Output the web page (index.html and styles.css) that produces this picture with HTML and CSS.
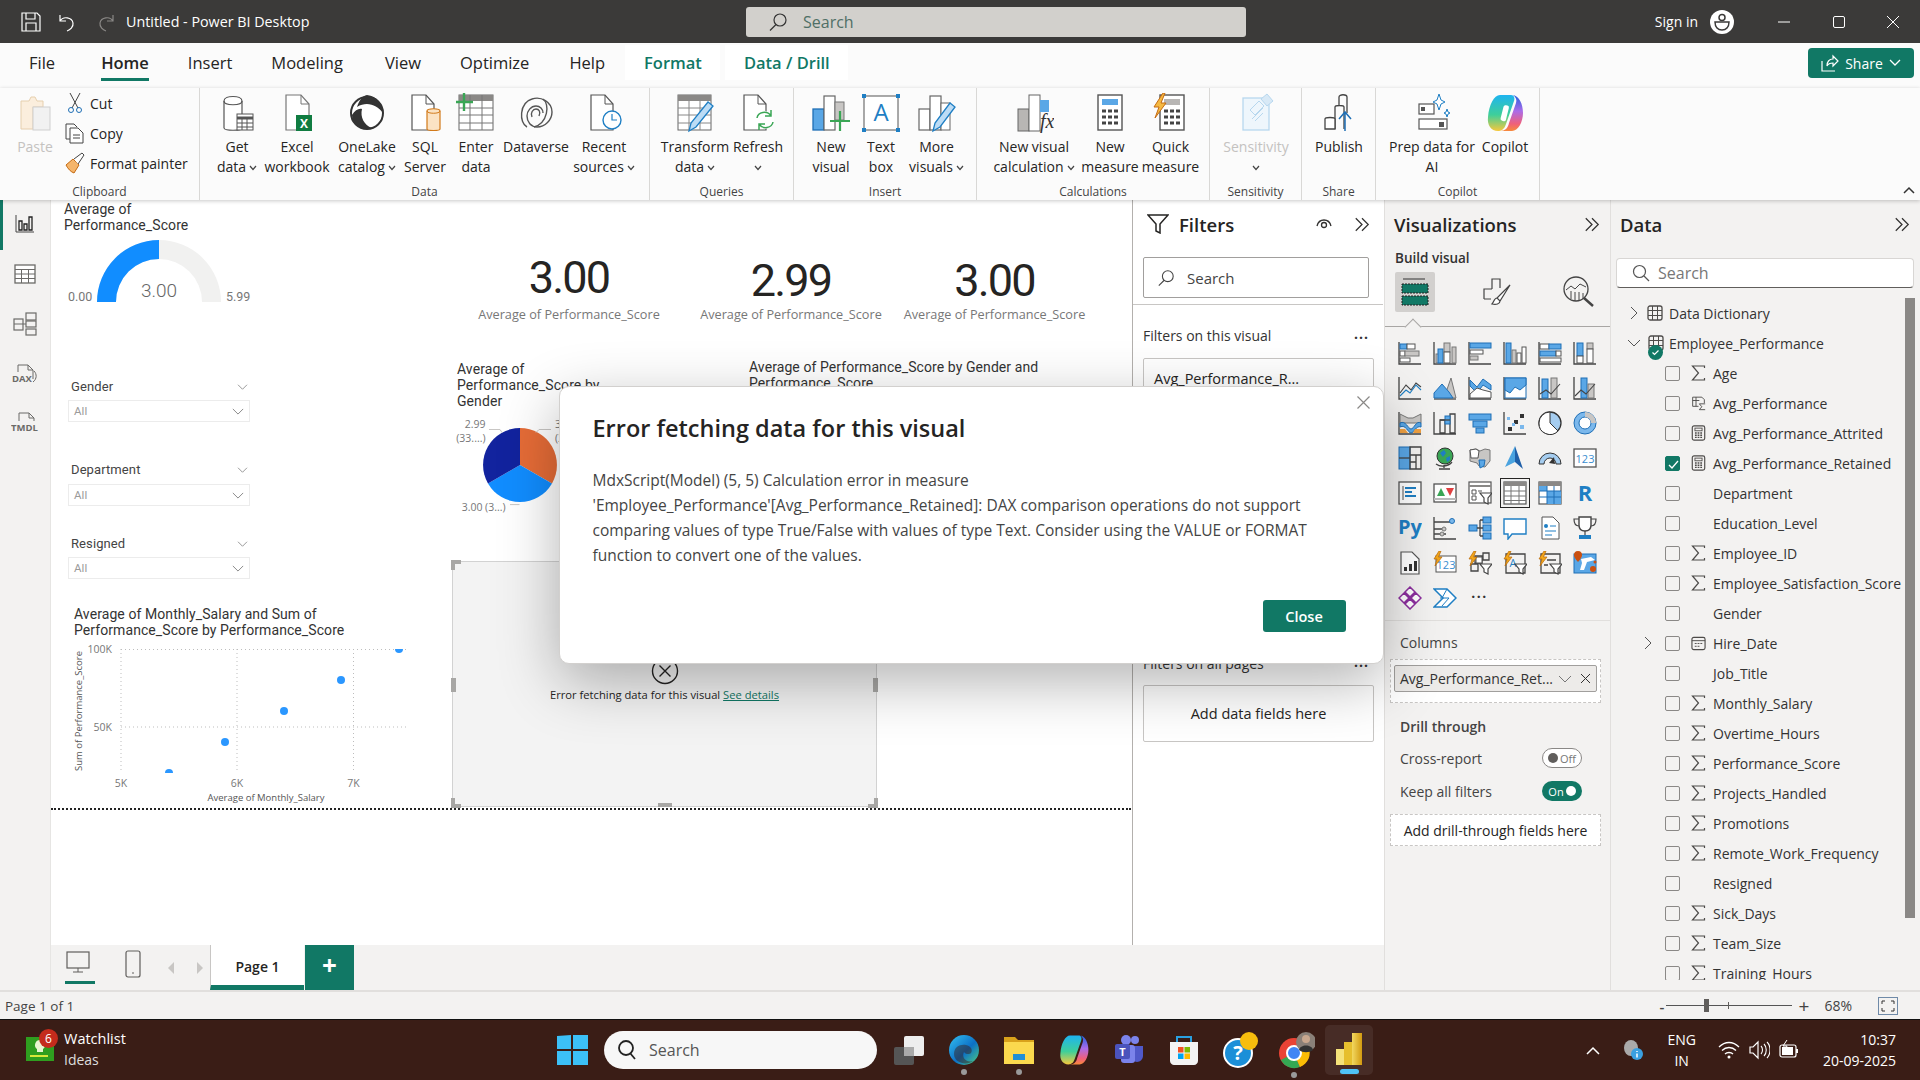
FILE: index.html
```html
<!DOCTYPE html>
<html lang="en">
<head>
<meta charset="utf-8">
<title>Untitled - Power BI Desktop</title>
<link rel="stylesheet" href="styles.css">
</head>
<body>
<svg class="defs" width="0" height="0" aria-hidden="true">
  <defs>
    <linearGradient id="cp1" x1="0" y1="0" x2="0" y2="1"><stop offset="0" stop-color="#1eb4f0"/><stop offset=".55" stop-color="#3ecf9a"/><stop offset="1" stop-color="#f7c83c"/></linearGradient>
    <linearGradient id="cp2" x1="0" y1="0" x2="0" y2="1"><stop offset="0" stop-color="#2560e0"/><stop offset=".45" stop-color="#ab6ce8"/><stop offset=".8" stop-color="#f0607a"/><stop offset="1" stop-color="#f78a3a"/></linearGradient>
    <linearGradient id="pb" x1="0" y1="0" x2="1" y2="0"><stop offset="0" stop-color="#f2d860"/><stop offset="1" stop-color="#d29a10"/></linearGradient>
    <linearGradient id="edge" x1="0" y1="0" x2="1" y2="1"><stop offset="0" stop-color="#35c1f1"/><stop offset=".55" stop-color="#0c70c6"/><stop offset="1" stop-color="#52d17c"/></linearGradient>
    <symbol id="sigma" viewBox="0 0 14 16"><path d="M13 3V1H1l6 7-6 7h12v-2" fill="none" stroke="#4d4b49" stroke-width="1.2"/></symbol>
    <symbol id="calc" viewBox="0 0 16 18"><rect x="1" y="1" width="14" height="16" rx="2" fill="none" stroke="#4d4b49" stroke-width="1.3"/><rect x="4" y="3.5" width="8" height="3" fill="none" stroke="#4d4b49"/><path d="M4 9h2M7 9h2M10 9h2M4 11.5h2M7 11.5h2M10 11.5h2M4 14h2M7 14h2M10 14h2" stroke="#4d4b49" stroke-width="1.5"/></symbol>
    <symbol id="dbl" viewBox="0 0 18 16"><path d="M2 1l7 7-7 7M9 1l7 7-7 7" fill="none" stroke="#323130" stroke-width="1.4"/></symbol>
    <symbol id="down" viewBox="0 0 14 8"><path d="M1 1l6 6 6-6" fill="none" stroke="#777" stroke-width="1"/></symbol>
    <symbol id="cv" viewBox="0 0 8 6"><path d="M1 1l3 3.5L7 1" fill="none" stroke="#444" stroke-width="1.2"/></symbol>
    <symbol id="tbl" viewBox="0 0 16 16"><rect x="1" y="1" width="14" height="14" rx="2" fill="none" stroke="#4d4b49" stroke-width="1.3"/><path d="M1 5.5h14M1 10.500h14M5.500 1v14M10.500 1v14" stroke="#4d4b49"/></symbol>
    <symbol id="mag" viewBox="0 0 20 20"><circle cx="12" cy="8" r="6" fill="none" stroke="currentColor" stroke-width="1.2"/><path d="M8 12.500L2 18.500" stroke="currentColor" stroke-width="1.2"/></symbol>
    <symbol id="bolt" viewBox="0 0 10 16"><path d="M6 0L1 8h3L2 15l7-9H5.500L8 0z" fill="#f2a71b" stroke="#b8690a" stroke-width=".7"/></symbol>
  </defs>
</svg>

<div class="app">
  <header class="titlebar">
    <div class="tb-left">
      <svg class="tb-ic" viewBox="0 0 20 20"><path d="M1 1h15l3 3v15H1zM5 1v6h9V1M5 19v-8h10v8" fill="none" stroke="#fff" stroke-width="1.2"/></svg>
      <svg class="tb-ic" viewBox="0 0 20 20"><path d="M2 3v6h6M2 9c3-5 12-4 13 2 .6 4-3 7-6 8" fill="none" stroke="#fff" stroke-width="1.200"/></svg>
      <svg class="tb-ic tb-dim" viewBox="0 0 20 20"><path d="M18 3v6h-6M18 9c-3-5-12-4-13 2-.6 4 3 7 6 8" fill="none" stroke="#8a8886" stroke-width="1.200"/></svg>
      <span class="tb-title">Untitled - Power BI Desktop</span>
    </div>
    <div class="tb-search"><svg class="tb-mag"><use href="#mag"/></svg><span>Search</span></div>
    <div class="tb-right">
      <span class="tb-sign">Sign in</span>
      <svg class="tb-av" viewBox="0 0 24 24"><circle cx="12" cy="12" r="12" fill="#fff"/><circle cx="12" cy="7.500" r="3" fill="none" stroke="#3b3a39" stroke-width="1.500"/><path d="M5 12h14c0 5-3 8-7 8s-7-3-7-8z" fill="none" stroke="#3b3a39" stroke-width="1.500"/></svg>
      <span class="win-b"><svg width="14" height="14" viewBox="0 0 14 14"><path d="M1 7h12" stroke="#fff"/></svg></span>
      <span class="win-b"><svg width="14" height="14" viewBox="0 0 14 14"><rect x="1.500" y="1.500" width="11" height="11" rx="1.500" fill="none" stroke="#fff"/></svg></span>
      <span class="win-b"><svg width="14" height="14" viewBox="0 0 14 14"><path d="M1 1l12 12M13 1L1 13" stroke="#fff"/></svg></span>
    </div>
  </header>

  <nav class="tabs">
    <span class="tab">File</span>
    <span class="tab tab-on">Home</span>
    <span class="tab">Insert</span>
    <span class="tab">Modeling</span>
    <span class="tab tab-view">View</span>
    <span class="tab">Optimize</span>
    <span class="tab tab-help">Help</span>
    <span class="tab tab-ctx">Format</span>
    <span class="tab tab-ctx tab-ctx2">Data / Drill</span>
    <button class="share"><svg width="18" height="18" viewBox="0 0 18 18"><path d="M1 7v10h13M6 12c0-5 3-7 6-7V2l5 5-5 5V9c-3 0-5 1-6 3z" fill="none" stroke="#fff" stroke-width="1.200"/></svg><span>Share</span><svg width="12" height="8" viewBox="0 0 12 8"><path d="M1 1l5 5 5-5" fill="none" stroke="#fff" stroke-width="1.300"/></svg></button>
  </nav>

  <section class="ribbon">
    <div class="grp g-clip">
      <div class="g-body clip-body">
        <div class="rb paste">
          <svg width="40" height="40" viewBox="0 0 40 40"><path d="M6 8h8l2-4h4l2 4h6v6H18v22H6z" fill="#fbeedd" stroke="#e6cfae"/><rect x="18" y="14" width="17" height="23" fill="#f1f1f1" stroke="#cfcfcf"/></svg>
          <span>Paste</span>
        </div>
        <div class="clip-col">
          <div class="clip-row"><svg width="16" height="22" viewBox="0 0 16 22"><path d="M3 1l8 15M13 1L5 16" stroke="#444" fill="none"/><circle cx="4" cy="18" r="2.500" fill="none" stroke="#1f6fb5"/><circle cx="12" cy="18" r="2.500" fill="none" stroke="#1f6fb5"/></svg><span>Cut</span></div>
          <div class="clip-row"><svg width="20" height="22" viewBox="0 0 20 22"><path d="M1 2h8l3 3M1 2v15h4" fill="none" stroke="#444"/><path d="M5 6h8l5 5v10H5z" fill="#fff" stroke="#444"/><path d="M8 13h7M8 16h7" stroke="#444"/></svg><span>Copy</span></div>
          <div class="clip-row"><svg width="20" height="22" viewBox="0 0 20 22"><path d="M1 13l7-6 6 6-5 8c-3-1-6-4-8-8z" fill="#f5b56b" stroke="#c46a12"/><path d="M9 7l8-6 2 2-6 9" fill="#fff" stroke="#444"/></svg><span>Format painter</span></div>
        </div>
      </div>
      <div class="g-label">Clipboard</div>
    </div>

    <div class="grp g-data">
      <div class="g-body cols-data">
        <div class="rb"><svg width="40" height="40" viewBox="0 0 40 40"><path d="M7 8c0-6 18-6 18 0v27c0 3-18 3-18 0z" fill="#fff" stroke="#555" stroke-width="1.200"/><path d="M7 8c0 5 18 5 18 0" fill="none" stroke="#555" stroke-width="1.200"/><rect x="20" y="21" width="16" height="16" fill="#fff" stroke="#555"/><path d="M20 25h16" stroke="#555" stroke-width="3"/><path d="M20 30h16M20 34h16M25 25v12M30 25v12" stroke="#555"/></svg><span>Get</span><span>data <svg class="cv"><use href="#cv"/></svg></span></div>
        <div class="rb"><svg width="40" height="40" viewBox="0 0 40 40"><path d="M9 2h15l8 9v26H9z" fill="#fff" stroke="#777" stroke-width="1.200"/><path d="M24 2v9h8" fill="none" stroke="#777"/><rect x="19" y="22" width="16" height="16" fill="#107c41"/><text x="27" y="35" class="xl">X</text></svg><span>Excel</span><span>workbook</span></div>
        <div class="rb"><svg width="40" height="40" viewBox="0 0 40 40"><circle cx="20" cy="20" r="16" fill="#fff" stroke="#333" stroke-width="2"/><path d="M20 2c10 1 16 9 16 18-6-8-16-12-26-6C12 8 15 3 20 2zM5 22c3-5 7-7 10-6-2 8 2 16 10 19-11 3-20-3-20-13z" fill="#333"/></svg><span>OneLake</span><span>catalog <svg class="cv"><use href="#cv"/></svg></span></div>
        <div class="rb"><svg width="40" height="40" viewBox="0 0 40 40"><path d="M7 2h14l8 9v26H7z" fill="#fff" stroke="#555" stroke-width="1.200"/><path d="M21 2v9h8" fill="none" stroke="#555"/><path d="M22 18c0-3 13-3 13 0v18c0 2-13 2-13 0z" fill="#fbe3c4" stroke="#d27a1a" stroke-width="1.200"/><path d="M22 18c0 3 13 3 13 0" fill="none" stroke="#d27a1a"/></svg><span>SQL</span><span>Server</span></div>
        <div class="rb"><svg width="40" height="40" viewBox="0 0 40 40"><rect x="3" y="2" width="34" height="35" fill="#fff" stroke="#666"/><rect x="3" y="2" width="34" height="6" fill="#8a8886"/><path d="M3 15h34M3 22h34M3 30h34M14 2v35M26 2v35" stroke="#777"/><path d="M8 0v18M0 9h17" stroke="#3aa655" stroke-width="2.400"/></svg><span>Enter</span><span>data</span></div>
        <div class="rb"><svg width="40" height="40" viewBox="0 0 40 40"><g fill="none" stroke="#555" stroke-width="1.400"><path d="M11 34C3 30 3 10 16 6c9-3 20 3 20 13 0 8-7 15-15 15-6 0-10-5-10-11 0-5 4-10 9-10 4 0 7 3 7 7"/><path d="M27 6c7 5 5 24-9 28"/><path d="M16 24c-2-4 1-8 4-8s5 3 3 7"/></g></svg><span>Dataverse</span></div>
        <div class="rb"><svg width="40" height="40" viewBox="0 0 40 40"><path d="M7 2h14l8 9v26H7z" fill="#fff" stroke="#555" stroke-width="1.200"/><path d="M21 2v9h8" fill="none" stroke="#555"/><circle cx="28" cy="27" r="9" fill="#fff" stroke="#1f7fc4" stroke-width="1.400"/><path d="M28 21v6h5" fill="none" stroke="#1f7fc4" stroke-width="1.200"/></svg><span>Recent</span><span>sources <svg class="cv"><use href="#cv"/></svg></span></div>
      </div>
      <div class="g-label">Data</div>
    </div>

    <div class="grp g-query">
      <div class="g-body cols-query">
        <div class="rb"><svg width="40" height="40" viewBox="0 0 40 40"><rect x="3" y="2" width="33" height="35" fill="#fff" stroke="#666"/><rect x="3" y="2" width="33" height="6" fill="#8a8886"/><path d="M3 15h33M3 22h33M3 30h33M14 2v35M25 2v35" stroke="#888"/><path d="M14 38l2-8 17-21 5 4-17 21z" fill="#bcdcf5" stroke="#1f7fc4" stroke-width="1.300"/></svg><span>Transform</span><span>data <svg class="cv"><use href="#cv"/></svg></span></div>
        <div class="rb"><svg width="40" height="40" viewBox="0 0 40 40"><path d="M6 2h14l8 9v26H6z" fill="#fff" stroke="#555" stroke-width="1.200"/><path d="M20 2v9h8" fill="none" stroke="#555"/><circle cx="27" cy="27" r="9" fill="#fff"/><path d="M19 25c1-6 10-8 14-2M35 29c-1 6-10 8-14 2M33 17v6h-6M21 37v-6h6" fill="none" stroke="#3aa655" stroke-width="1.500"/></svg><span>Refresh</span><span><svg class="cv"><use href="#cv"/></svg></span></div>
      </div>
      <div class="g-label">Queries</div>
    </div>

    <div class="grp g-insert">
      <div class="g-body cols-insert">
        <div class="rb"><svg width="40" height="40" viewBox="0 0 40 40"><rect x="2" y="16" width="11" height="21" fill="#5aa7e6" stroke="#1f6fb5" stroke-width="1.300"/><rect x="13" y="3" width="11" height="34" fill="#fff" stroke="#666" stroke-width="1.200"/><rect x="24" y="9" width="9" height="18" fill="#c8c6c4" stroke="#777"/><path d="M29 18v20M19 28h20" stroke="#3aa655" stroke-width="2.200"/></svg><span>New</span><span>visual</span></div>
        <div class="rb"><svg width="40" height="40" viewBox="0 0 40 40"><rect x="3" y="3" width="34" height="34" fill="#fff" stroke="#555"/><path d="M1 1h4v4H1zM35 1h4v4h-4zM1 35h4v4H1zM35 35h4v4h-4z" fill="#1f7fc4"/><text x="20" y="28" class="tbA">A</text></svg><span>Text</span><span>box</span></div>
        <div class="rb"><svg width="40" height="40" viewBox="0 0 40 40"><rect x="2" y="16" width="11" height="21" fill="#fff" stroke="#666" stroke-width="1.200"/><rect x="13" y="3" width="11" height="34" fill="#fff" stroke="#666" stroke-width="1.200"/><rect x="24" y="10" width="9" height="27" fill="#fff" stroke="#666"/><path d="M16 38l2-8 15-20 5 4-15 20z" fill="#bcdcf5" stroke="#1f7fc4" stroke-width="1.300"/></svg><span>More</span><span>visuals <svg class="cv"><use href="#cv"/></svg></span></div>
      </div>
      <div class="g-label">Insert</div>
    </div>

    <div class="grp g-calc">
      <div class="g-body cols-calc">
        <div class="rb"><svg width="40" height="40" viewBox="0 0 40 40"><rect x="4" y="16" width="11" height="22" fill="#b8b6b4" stroke="#666"/><rect x="15" y="2" width="11" height="36" fill="#fff" stroke="#666"/><rect x="26" y="7" width="9" height="12" fill="#5aa7e6"/><text x="26" y="35" class="fx">fx</text></svg><span>New visual</span><span>calculation <svg class="cv"><use href="#cv"/></svg></span></div>
        <div class="rb"><svg width="40" height="40" viewBox="0 0 40 40"><rect x="8" y="2" width="24" height="35" fill="#fff" stroke="#555" stroke-width="1.400"/><rect x="12" y="6" width="16" height="6" fill="#5aa7e6"/><path d="M12 18h4M18 18h4M24 18h4M12 24h4M18 24h4M24 24h4M12 30h4M18 30h4M24 30h4" stroke="#444" stroke-width="3"/></svg><span>New</span><span>measure</span></div>
        <div class="rb"><svg width="40" height="40" viewBox="0 0 40 40"><rect x="10" y="2" width="24" height="35" fill="#fff" stroke="#555" stroke-width="1.400"/><rect x="14" y="6" width="16" height="6" fill="#b8b6b4"/><path d="M14 18h4M20 18h4M26 18h4M14 24h4M20 24h4M26 24h4M14 30h4M20 30h4M26 30h4" stroke="#444" stroke-width="3"/><path d="M13 0L4 14h5L5 25l11-15h-5l4-10z" fill="#f5b942" stroke="#c46a12"/></svg><span>Quick</span><span>measure</span></div>
      </div>
      <div class="g-label">Calculations</div>
    </div>

    <div class="grp g-sens">
      <div class="g-body cols-one">
        <div class="rb rb-off"><svg width="40" height="40" viewBox="0 0 40 40"><rect x="7" y="5" width="26" height="32" fill="#eef6fc" stroke="#b7d7ee" stroke-width="1.300"/><path d="M14 17l9-9 5 5-9 9zM16 26l11-11M19 28l8-8" fill="none" stroke="#b7d7ee"/><path d="M25 6l6-5 6 7-6 5z" fill="#d8e9f6" stroke="#b7d7ee"/></svg><span>Sensitivity</span><span><svg class="cv"><use href="#cv"/></svg></span></div>
      </div>
      <div class="g-label">Sensitivity</div>
    </div>

    <div class="grp g-share">
      <div class="g-body cols-one">
        <div class="rb"><svg width="40" height="40" viewBox="0 0 40 40"><path d="M16 36V14c0-2 9-2 9 0v22M20 13V4c0-3 8-3 8 0v16" fill="none" stroke="#444" stroke-width="1.300"/><path d="M6 36V26c0-2 10-2 10 0v10z" fill="#fff" stroke="#444" stroke-width="1.300"/><path d="M26 38V20M20 26l6-7 6 7" fill="none" stroke="#1f6fb5" stroke-width="1.500"/></svg><span>Publish</span></div>
      </div>
      <div class="g-label">Share</div>
    </div>

    <div class="grp g-copilot">
      <div class="g-body cols-copilot">
        <div class="rb"><svg width="40" height="40" viewBox="0 0 40 40"><rect x="7" y="11" width="15" height="10" fill="#fff" stroke="#555" stroke-width="1.200"/><rect x="9" y="14" width="4" height="4" fill="#555"/><rect x="7" y="26" width="28" height="10" fill="#fff" stroke="#555" stroke-width="1.200"/><rect x="27" y="29" width="5" height="5" fill="#555"/><path d="M27 1l2 6 4 2-4 2-2 6-2-6-4-2 4-2z M35 16l1 3 2 1-2 1-1 3-1-3-2-1 2-1z" fill="#fff" stroke="#1f7fc4"/></svg><span>Prep data for</span><span>AI</span></div>
        <div class="rb"><svg width="40" height="40" viewBox="0 0 40 40"><path d="M15 2h11c3 0 4 3 3 6l-8 23c-2 6-5 7-8 7-7 0-11-6-10-14C4 12 9 2 15 2z" fill="url(#cp1)"/><path d="M27 38H15c5 0 8-3 9-8l7-20c1-3 0-6-3-8 6 1 10 9 10 18 0 9-5 18-11 18z" fill="url(#cp2)"/><rect x="17" y="12" width="5.500" height="16" rx="2" fill="#fff" transform="rotate(14 19 20)"/></svg><span>Copilot</span></div>
      </div>
      <div class="g-label">Copilot</div>
    </div>
    <svg class="collapse" width="12" height="8" viewBox="0 0 12 8"><path d="M1 7l5-5 5 5" fill="none" stroke="#333" stroke-width="1.500"/></svg>
  </section>

  <div class="main">
    <aside class="rail">
      <svg width="20" height="20" viewBox="0 0 20 20"><path d="M1 1v17h18" fill="none" stroke="#444"/><path d="M4 7h3v9H4zM9 10h3v6H9zM14 3h3v13h-3z" fill="none" stroke="#222" stroke-width="1.300"/></svg>
      <svg width="22" height="20" viewBox="0 0 22 20"><rect x="1" y="1" width="20" height="18" fill="#fff" stroke="#6b6a68" stroke-width="1.300"/><path d="M1 5.500h20M1 10h20M1 14.500h20M7.500 5v14M14.500 5v14" stroke="#6b6a68"/></svg>
      <svg width="24" height="24" viewBox="0 0 24 24"><g fill="none" stroke="#6b6a68" stroke-width="1.200"><rect x="1" y="7" width="9" height="11"/><rect x="13" y="1" width="10" height="7"/><rect x="13" y="9" width="10" height="6"/><rect x="13" y="17" width="10" height="6"/><path d="M1 12h9M10 12h3"/></g></svg>
      <svg class="rail-doc" width="26" height="24" viewBox="0 0 26 24"><path d="M6 9V2h10l5 5v9" fill="none" stroke="#6b6a68"/><path d="M16 2v5h5" fill="none" stroke="#6b6a68"/><path d="M22 8c3 3 3 8-1 11" fill="none" stroke="#6b6a68"/><text x="0" y="19" class="raillab">DAX</text></svg>
      <svg class="rail-doc" width="28" height="24" viewBox="0 0 28 24"><path d="M8 10V2h10l5 5v3" fill="none" stroke="#6b6a68"/><path d="M18 2v5h5" fill="none" stroke="#6b6a68"/><text x="0" y="20" class="raillab">TMDL</text></svg>
    </aside>

    <div class="center">
      <div class="workrow">
        <div class="canvas">
          <div class="v-title t-gauge">Average of<br>Performance_Score</div>
          <svg class="gauge" viewBox="0 0 124 62"><path d="M0 62a62 62 0 0 1 124 0h-19a43 43 0 0 0-86 0z" fill="#f1f1f0"/><path d="M0 62A62 62 0 0 1 62 0v19a43 43 0 0 0-43 43z" fill="#118dff"/></svg>
          <span class="g-val">3.00</span><span class="g-min">0.00</span><span class="g-max">5.99</span>

          <div class="kpi k1"><b>3.00</b><span>Average of Performance_Score</span></div>
          <div class="kpi k2"><b>2.99</b><span>Average of Performance_Score</span></div>
          <div class="kpi k3"><b>3.00</b><span>Average of Performance_Score</span></div>

          <div class="slicer s1"><div class="sl-h"><span>Gender</span><svg width="11" height="6"><use href="#down"/></svg></div><div class="sl-b"><span>All</span><svg width="12" height="7"><use href="#down"/></svg></div></div>
          <div class="slicer s2"><div class="sl-h"><span>Department</span><svg width="11" height="6"><use href="#down"/></svg></div><div class="sl-b"><span>All</span><svg width="12" height="7"><use href="#down"/></svg></div></div>
          <div class="slicer s3"><div class="sl-h"><span>Resigned</span><svg width="11" height="6"><use href="#down"/></svg></div><div class="sl-b"><span>All</span><svg width="12" height="7"><use href="#down"/></svg></div></div>

          <div class="v-title t-pie">Average of<br>Performance_Score by<br>Gender</div>
          <svg class="pie" viewBox="0 0 74 74"><path d="M37 37V0a37 37 0 0 1 32 55.500z" fill="#e66c37"/><path d="M37 37l32 18.500a37 37 0 0 1-64 0z" fill="#118dff"/><path d="M37 37L5 55.500A37 37 0 0 1 37 0z" fill="#12239e"/></svg>
          <svg class="pie-labels" viewBox="0 0 120 100"><g class="pl"><text x="38.500" y="13.500" text-anchor="end">2.99</text><text x="38.500" y="28" text-anchor="end">(33....)</text><text x="58.600" y="97" text-anchor="end">3.00 (3...)</text><text x="108" y="13.500">3</text><text x="108" y="28">(3</text></g><path d="M42 15.500h11l2 3M63 90.600h9.500M104 15.500H92l-3 3" fill="none" stroke="#c8c6c4"/></svg>
          <div class="v-title t-bar">Average of Performance_Score by Gender and<br>Performance_Score</div>

          <div class="v-title t-scat">Average of Monthly_Salary and Sum of<br>Performance_Score by Performance_Score</div>
          <svg class="scatter" viewBox="0 0 360 165" width="360" height="165">
            <path d="M61 9.500h288M61 87h288M61 9v124M177 9v124M293.500 9v124" fill="none" stroke="#bdbdbd" stroke-dasharray="1 3"/>
            <defs><clipPath id="plot"><rect x="61" y="9" width="288" height="124"/></clipPath></defs>
            <g clip-path="url(#plot)" fill="#2b97ff"><circle cx="109" cy="133" r="4"/><circle cx="165" cy="102" r="4"/><circle cx="224" cy="71" r="4"/><circle cx="281" cy="40" r="4"/><circle cx="339" cy="9" r="4"/></g>
            <g class="ax"><text x="52" y="13" text-anchor="end">100K</text><text x="52" y="91" text-anchor="end">50K</text><text x="61" y="147" text-anchor="middle">5K</text><text x="177" y="147" text-anchor="middle">6K</text><text x="293.500" y="147" text-anchor="middle">7K</text></g>
            <text class="axt" x="206" y="161" text-anchor="middle">Average of Monthly_Salary</text>
            <text class="axt" transform="translate(22 71) rotate(-90)" text-anchor="middle">Sum of Performance_Score</text>
          </svg>

          <div class="dotline"></div>

          <div class="errvis">
            <i class="h h-tl"></i><i class="h h-tr"></i><i class="h h-bl"></i><i class="h h-br"></i>
            <i class="h h-l"></i><i class="h h-r"></i><i class="h h-b"></i>
            <svg class="err-ic" width="28" height="28" viewBox="0 0 28 28"><circle cx="14" cy="14" r="12.500" fill="none" stroke="#252423" stroke-width="1.400"/><path d="M8.500 8.500l11 11M19.500 8.500l-11 11" stroke="#252423" stroke-width="1.400"/></svg>
            <div class="err-txt">Error fetching data for this visual <a>See details</a></div>
          </div>
        </div>

        <aside class="filters">
          <div class="phead fhead">
            <svg width="22" height="20" viewBox="0 0 22 20"><path d="M1 1h20l-8 9v9l-4-2v-7z" fill="none" stroke="#252423" stroke-width="1.500"/></svg>
            <span class="ptitle">Filters</span>
            <svg class="eye" width="16" height="12" viewBox="0 0 16 12"><path d="M1 8c2-8 12-8 14 0" fill="none" stroke="#323130" stroke-width="1.300"/><circle cx="8" cy="7" r="2.500" fill="none" stroke="#323130" stroke-width="1.300"/></svg>
            <svg class="dbl" width="16" height="15"><use href="#dbl"/></svg>
          </div>
          <div class="f-search"><svg width="18" height="18" class="f-mag"><use href="#mag"/></svg><span>Search</span></div>
          <div class="f-sec">
            <div class="f-lab"><span>Filters on this visual</span><em>...</em></div>
            <div class="f-card"><span>Avg_Performance_R...</span></div>
            <div class="f-lab f-lab2"><span>Filters on all pages</span><em>...</em></div>
            <div class="f-add">Add data fields here</div>
          </div>
        </aside>
      </div>

      <div class="pagebar">
        <div class="pb-views">
          <span class="pb-v pb-von"><svg width="24" height="24" viewBox="0 0 24 24"><rect x="1" y="2" width="22" height="16" fill="none" stroke="#605e5c" stroke-width="1.200"/><path d="M12 18v4M7 22h10" stroke="#605e5c"/></svg></span>
          <span class="pb-v"><svg width="16" height="28" viewBox="0 0 16 28"><rect x="1" y="1" width="14" height="26" rx="2" fill="none" stroke="#605e5c" stroke-width="1.200"/><path d="M7 23h2" stroke="#605e5c"/></svg></span>
          <span class="pb-arr"><svg width="7" height="12" viewBox="0 0 7 12"><path d="M6 0L0 6l6 6z" fill="#c8c6c4"/></svg><svg width="7" height="12" viewBox="0 0 7 12"><path d="M1 0l6 6-6 6z" fill="#c8c6c4"/></svg></span>
        </div>
        <div class="pb-tab">Page 1</div>
        <div class="pb-add">+</div>
      </div>
    </div>

    <aside class="viz">
      <div class="phead"><span class="ptitle">Visualizations</span><svg class="dbl" width="16" height="15"><use href="#dbl"/></svg></div>
      <div class="v-build">Build visual</div>
      <div class="v-tabs">
        <span class="vt vt-on"><svg width="28" height="28" viewBox="0 0 28 28"><path d="M2 1h22" stroke="#333"/><rect x="1" y="6" width="26" height="9" fill="#117865" stroke="#222" stroke-dasharray="2 1"/><rect x="1" y="18" width="26" height="9" fill="#117865" stroke="#222" stroke-dasharray="2 1"/></svg></span>
        <span class="vt"><svg width="28" height="30" viewBox="0 0 28 30"><path d="M1 22V12h8M9 12V2h8v9M1 22h7" fill="none" stroke="#444" stroke-width="1.200"/><path d="M27 8L14 21l3 3zM14 21c-3 0-3 4-5 6 4 1 8 0 8-3" fill="#fff" stroke="#444" stroke-width="1.200"/></svg></span>
        <span class="vt"><svg width="32" height="32" viewBox="0 0 32 32"><circle cx="13" cy="13" r="12" fill="none" stroke="#444" stroke-width="1.300"/><path d="M3 14l5-4 4 3 5-5 6 3M8 15v8M12 16v9M16 16v9M20 17v6" fill="none" stroke="#444"/><path d="M21 22l9 8" stroke="#444" stroke-width="2.400"/></svg></span>
      </div>
      <div class="v-grid">
        <svg viewBox="0 0 24 24"><path class="k" d="M1 1v22h22"/><rect class="bl" x="2" y="3" width="7" height="5"/><rect class="ln" x="9" y="3" width="8" height="5"/><rect class="ln" x="2" y="10" width="5" height="5"/><rect class="gy" x="7" y="10" width="14" height="5"/><rect class="ln" x="2" y="17" width="10" height="4"/></svg>
        <svg viewBox="0 0 24 24"><path class="k" d="M1 1v22h22"/><rect class="gy" x="3" y="13" width="5" height="9"/><rect class="bl" x="5" y="8" width="5" height="14"/><rect class="gy" x="11" y="2" width="6" height="9"/><rect class="ln" x="11" y="11" width="6" height="11"/><rect class="gy" x="19" y="6" width="4" height="16"/></svg>
        <svg viewBox="0 0 24 24"><path class="k" d="M1 1v22h22"/><rect class="bl" x="2" y="2" width="21" height="5"/><rect class="ln" x="2" y="9" width="13" height="4"/><rect class="gy" x="2" y="15" width="8" height="4"/></svg>
        <svg viewBox="0 0 24 24"><path class="k" d="M1 1v22h22"/><rect class="bl" x="3" y="2" width="5" height="20"/><rect class="gy" x="9" y="9" width="4" height="13"/><rect class="ln" x="14" y="12" width="4" height="10"/><rect class="ln" x="19" y="6" width="4" height="16"/></svg>
        <svg viewBox="0 0 24 24"><path class="k" d="M1 1v22h22"/><rect class="ln" x="2" y="3" width="9" height="5"/><rect class="bl" x="11" y="3" width="12" height="5"/><rect class="bl" x="2" y="10" width="16" height="5"/><rect class="ln" x="18" y="10" width="5" height="5"/><rect class="ln" x="2" y="17" width="21" height="4"/></svg>
        <svg viewBox="0 0 24 24"><path class="k" d="M1 1v22h22"/><rect class="bl" x="4" y="2" width="6" height="13"/><rect class="ln" x="4" y="15" width="6" height="7"/><rect class="gy" x="14" y="2" width="6" height="6"/><rect class="ln" x="14" y="8" width="6" height="14"/></svg>

        <svg viewBox="0 0 24 24"><path class="k" d="M1 1v22h22"/><path class="kl" d="M2 17l6-8 5 5 5-7 5 4"/><path class="klb" d="M2 20l6-6 4 3 6-8 5 5"/></svg>
        <svg viewBox="0 0 24 24"><path class="k" d="M1 23h22"/><path class="gy" d="M11 22l7-20 5 20z"/><path class="bl" d="M1 22V17l8-9 7 8 4 6z"/></svg>
        <svg viewBox="0 0 24 24"><path class="k" d="M1 1v22h22"/><path class="bl" d="M2 4l7 7 6-8 8 6v5l-8-5-6 8-7-7z"/><path class="ln" d="M2 18l7-6 6 2 8 2v6H2z"/></svg>
        <svg viewBox="0 0 24 24"><path class="k" d="M1 1v22h22"/><rect class="ln2" x="2" y="2" width="21" height="20"/><path class="bl" d="M2 2h21v7l-6 5-5-3-5 6-5-3z"/></svg>
        <svg viewBox="0 0 24 24"><path class="k" d="M1 1v22h22"/><rect class="bl" x="4" y="3" width="6" height="19"/><rect class="gy" x="13" y="2" width="6" height="20"/><path class="kl" d="M2 18l6-4 5 4 9-10"/></svg>
        <svg viewBox="0 0 24 24"><path class="k" d="M1 1v22h22"/><rect class="bl" x="8" y="2" width="6" height="20"/><rect class="gy" x="15" y="8" width="6" height="14"/><path class="kl" d="M2 20l6-6 5 4 9-10"/></svg>

        <svg viewBox="0 0 24 24"><path class="k" d="M1 1v22h22"/><path class="gy" d="M2 3l8 4 5 0 8-4v9H2z"/><path d="M2 12c6-3 8 6 11 6s5-9 10-6v4c-5-2-7 6-10 6S8 13 2 16z" fill="#5aa7e6" stroke="#1f6fb5"/><path d="M2 18h5l3 4H2zM17 18h6v4h-8z" fill="#f0a040"/></svg>
        <svg viewBox="0 0 24 24"><path class="k" d="M1 1v22h22M7 9v13h5V9zM17 3v19h5V3z"/><rect class="bl" x="12" y="5" width="5" height="8"/><path class="k" d="M7 9h10"/></svg>
        <svg viewBox="0 0 24 24"><rect class="bl" x="1" y="3" width="22" height="6"/><rect class="bl" x="5" y="10" width="14" height="6"/><rect class="bl" x="8" y="17" width="8" height="5"/></svg>
        <svg viewBox="0 0 24 24"><path class="k" d="M1 1v22h22"/><path d="M5 16h4v4H5zM11 9h4v4h-4z" fill="#333"/><path d="M9 12h3v3H9zM17 14h4v4h-4zM4 6h3v3H4z" fill="#7bb8ec"/><path d="M17 3h4v4h-4z" fill="#333"/></svg>
        <svg viewBox="0 0 24 24"><circle cx="12" cy="12" r="11" fill="#a5cdf0" stroke="#333" stroke-width="1.300"/><path d="M12 1v11l8 8A11 11 0 0 1 1 12 11 11 0 0 1 12 1z" fill="#fff" stroke="#333"/></svg>
        <svg viewBox="0 0 24 24"><circle cx="12" cy="12" r="11" fill="#7bb8ec" stroke="#1f6fb5"/><circle cx="12" cy="12" r="6" fill="#fff" stroke="#1f6fb5"/><path d="M12 1a11 11 0 0 1 11 11h-5a6 6 0 0 0-6-6z" fill="#c8c6c4"/></svg>

        <svg viewBox="0 0 24 24"><rect class="bl" x="1" y="1" width="11" height="22"/><path class="k" d="M12 1h11v22H12zM12 9h11M18 9v14M12 16h6"/><path class="k" d="M1 12h11"/></svg>
        <svg viewBox="0 0 24 24"><circle cx="12" cy="10" r="8" fill="#3aa655" stroke="#333"/><path d="M7 7l4-3 2 3-3 4zM13 12l4-2 0 4-3 2z" fill="#1f7fc4"/><path class="k" d="M3 18c4 3 12 3 16-2M11 19v3M6 23h11"/></svg>
        <svg viewBox="0 0 24 24"><path class="gy" d="M2 4l6-1 4 2 5-2 5 1v11l-5 6-6-1-2-3-7-2z"/><path class="ln" d="M2 4l6-1 3 2-1 7H3z"/><path class="bl" d="M11 14h6l-1 6-4 2z"/></svg>
        <svg viewBox="0 0 24 24"><path d="M12 0L2 21l10-5z" fill="#4aa3df"/><path d="M12 0v16l8 7z" fill="#1f5fa8"/></svg>
        <svg viewBox="0 0 24 24"><path d="M1 18a11 11 0 0 1 22 0h-5a6 6 0 0 0-12 0z" fill="#a5cdf0" stroke="#333"/><path d="M11 17l5-6 1 7z" fill="#333"/></svg>
        <svg viewBox="0 0 24 24"><rect x="1" y="3" width="22" height="18" fill="#fff" stroke="#555" stroke-width="1.300"/><text x="12" y="16.500" class="v123">123</text></svg>

        <svg viewBox="0 0 24 24"><rect x="1" y="1" width="22" height="22" fill="#fff" stroke="#555" stroke-width="1.300"/><path d="M5 5v14" stroke="#555"/><path d="M7 7h11M7 11h7M7 15h11" stroke="#1f7fc4" stroke-width="1.800"/></svg>
        <svg viewBox="0 0 24 24"><rect x="1" y="3" width="22" height="18" fill="#fff" stroke="#555" stroke-width="1.300"/><path d="M8 7l4 8H4z" fill="#3aa655"/><path d="M13 7h8l-4 8z" fill="#e04040"/><path d="M1 18h22" stroke="#bbb" stroke-width="2"/></svg>
        <svg viewBox="0 0 24 24"><rect x="1" y="1" width="22" height="21" fill="#fff" stroke="#555" stroke-width="1.200"/><path d="M1 5h22" stroke="#8a8886" stroke-width="2"/><path d="M4 9h4v4H4zM4 15h4v4H4zM10 10h4" fill="none" stroke="#555"/><path d="M12 12h12l-4 5v6l-4-2v-4z" fill="#fff" stroke="#444" stroke-width="1.200"/></svg>
        <div class="v-sel"><svg viewBox="0 0 24 24"><rect x="1" y="1" width="22" height="22" fill="#fff" stroke="#555" stroke-width="1.200"/><rect x="1" y="1" width="22" height="4" fill="#8a8886"/><path d="M1 10h22M1 15h22M1 19.500h22M8 5v18M16 5v18" stroke="#777"/></svg></div>
        <svg viewBox="0 0 24 24"><rect x="1" y="1" width="22" height="22" fill="#fff" stroke="#555" stroke-width="1.200"/><rect x="1" y="1" width="22" height="4" fill="#8a8886"/><rect x="9" y="10" width="14" height="13" fill="#5aa7e6"/><rect x="1" y="5" width="8" height="5" fill="#5aa7e6"/><path d="M1 10h22M1 16h22M9 5v18M16 5v18" stroke="#1f6fb5"/></svg>
        <svg viewBox="0 0 24 24"><text x="12" y="20" class="vR">R</text></svg>

        <svg viewBox="0 0 24 24"><text x="0" y="18" class="vPy">Py</text></svg>
        <svg viewBox="0 0 24 24"><path class="k" d="M1 1v22h22M1 6h16M1 13h8M1 18h12"/><circle cx="19" cy="5" r="2.500" fill="#7bb8ec" stroke="#1f6fb5"/><circle cx="11" cy="13" r="2" fill="#c8c6c4" stroke="#777"/><circle cx="9" cy="18" r="2" fill="#c8c6c4" stroke="#777"/></svg>
        <svg viewBox="0 0 24 24"><rect class="bl" x="1" y="9" width="8" height="6"/><rect class="bl" x="15" y="1" width="8" height="6"/><rect class="bl" x="15" y="9" width="8" height="6"/><rect class="bl" x="15" y="17" width="8" height="6"/><path class="k" d="M9 12h6M12 4v16M12 4h3M12 20h3"/></svg>
        <svg viewBox="0 0 24 24"><path d="M1 3h22v15H9l-4 5v-5H1z" fill="#fff" stroke="#1f7fc4" stroke-width="1.400"/></svg>
        <svg viewBox="0 0 24 24"><path d="M4 1h11l6 6v16H4z" fill="#fff" stroke="#555"/><circle cx="8" cy="10" r="2" fill="#1f7fc4"/><path d="M12 10h6M7 15h11M7 19h7" stroke="#1f7fc4"/></svg>
        <svg viewBox="0 0 24 24"><path d="M6 1h12v8c0 4-2 6-6 6s-6-2-6-6z" fill="#fff" stroke="#444" stroke-width="1.400"/><path d="M6 3H1c0 5 2 7 5 7M18 3h5c0 5-2 7-5 7M12 15v4" fill="none" stroke="#444" stroke-width="1.200"/><path d="M6 19h12v4H6z" fill="#1f7fc4"/></svg>

        <svg viewBox="0 0 24 24"><path d="M3 1h11l7 7v15H3z" fill="#fff" stroke="#555" stroke-width="1.200"/><path d="M6 16h3v4H6zM11 13h3v7h-3zM16 10h3v10h-3z" fill="#333"/></svg>
        <svg viewBox="0 0 24 24"><rect x="3" y="5" width="20" height="16" fill="#fff" stroke="#555"/><text x="13" y="18" class="v123">123</text><use href="#bolt" x="0" y="0" width="10" height="16"/></svg>
        <svg viewBox="0 0 24 24"><path class="k" d="M7 5h7v7H7zM15 2h6v7h-6zM3 13h7v7H3z"/><rect class="ln" x="8" y="6" width="6" height="6"/><path d="M12 13h12l-4 5v5l-4-2v-3z" fill="#fff" stroke="#444" stroke-width="1.200"/><use href="#bolt" x="0" y="0" width="10" height="16"/></svg>
        <svg viewBox="0 0 24 24"><path class="k" d="M3 3h19v19H3z"/><text x="10" y="16" class="vA">A</text><path d="M12 13h12l-4 5v5l-4-2v-3z" fill="#fff" stroke="#444" stroke-width="1.200"/><use href="#bolt" x="0" y="0" width="10" height="16"/></svg>
        <svg viewBox="0 0 24 24"><path class="k" d="M3 3h19v19H3zM9 9h9M6 14h4"/><path d="M12 13h12l-4 5v5l-4-2v-3z" fill="#fff" stroke="#444" stroke-width="1.200"/><use href="#bolt" x="0" y="0" width="10" height="16"/></svg>
        <svg viewBox="0 0 24 24"><rect x="1" y="3" width="22" height="19" fill="#5aa7e6" stroke="#1f6fb5"/><path d="M8 8l10-2 4 3-8 2-3 8-4 0 2-7z" fill="#fff"/><path d="M5 0c3 0 4 2 4 4 0 3-4 7-4 7S1 7 1 4c0-2 1-4 4-4z" fill="#ca5010"/><circle cx="20" cy="18" r="3" fill="#ca5010"/><circle cx="22" cy="11" r="1.500" fill="#ca5010"/></svg>

        <svg viewBox="0 0 24 24"><path d="M12 1l5 5-5 5-5-5zM6 7l5 5-5 5-5-5zM18 7l5 5-5 5-5-5zM12 13l5 5-5 5-5-5z" fill="#fff" stroke="#8c2f9e" stroke-width="1.500"/></svg>
        <svg viewBox="0 0 24 24"><path d="M1 3h13l9 9-9 9H1l9-9z" fill="#fff" stroke="#1f7fc4" stroke-width="1.500"/><path d="M7 12h9l-7 8M14 3l-5 9" fill="none" stroke="#1f7fc4"/></svg>
        <span class="v-more">...</span>
      </div>
      <div class="v-div"></div>
      <div class="v-lab">Columns</div>
      <div class="v-drop"><div class="chip"><span>Avg_Performance_Ret...</span><svg width="14" height="8"><use href="#down"/></svg><svg width="11" height="11" viewBox="0 0 11 11"><path d="M1 1l9 9M10 1l-9 9" stroke="#323130"/></svg></div></div>
      <div class="v-lab v-bold">Drill through</div>
      <div class="v-tog"><span>Cross-report</span><span class="tog tog-off"><i></i>Off</span></div>
      <div class="v-tog"><span>Keep all filters</span><span class="tog tog-on">On<i></i></span></div>
      <div class="v-add">Add drill-through fields here</div>
    </aside>

    <aside class="data">
      <div class="phead"><span class="ptitle">Data</span><svg class="dbl" width="16" height="15"><use href="#dbl"/></svg></div>
      <div class="d-search"><svg width="18" height="18" viewBox="0 0 18 18"><circle cx="7.500" cy="7.500" r="6" fill="none" stroke="#555" stroke-width="1.200"/><path d="M12 12l5 5" stroke="#555" stroke-width="1.200"/></svg><span>Search</span></div>
      <div class="tree">
        <div class="row tbl"><svg class="arrow" width="9" height="14" viewBox="0 0 9 14"><path d="M1 1l6 6-6 6" fill="none" stroke="#555"/></svg><svg class="ticon" width="16" height="16"><use href="#tbl"/></svg><span>Data Dictionary</span></div>
        <div class="row tbl"><svg class="arrow arrow-d" width="14" height="9" viewBox="0 0 14 9"><path d="M1 1l6 6 6-6" fill="none" stroke="#555"/></svg><svg class="ticon" width="16" height="16"><use href="#tbl"/></svg><i class="okbadge"><svg width="9" height="9" viewBox="0 0 9 9"><path d="M1.500 4.500l2 2 4-4" fill="none" stroke="#fff" stroke-width="1.200"/></svg></i><span>Employee_Performance</span></div>
        <div class="row fld"><i class="cb"></i><svg class="fi"><use href="#sigma"/></svg><span>Age</span></div>
        <div class="row fld"><i class="cb"></i><svg class="fi" viewBox="0 0 18 18"><path d="M9 13H2V2h11l3 3v4M2 6h8M6 2v11" fill="none" stroke="#4d4b49" stroke-width="1.100"/><path d="M17 10h-7l3 3.500-3 3.500h7" fill="none" stroke="#4d4b49" stroke-width="1.100"/></svg><span>Avg_Performance</span></div>
        <div class="row fld"><i class="cb"></i><svg class="fi"><use href="#calc"/></svg><span>Avg_Performance_Attrited</span></div>
        <div class="row fld"><i class="cb cb-on"><svg width="15" height="15" viewBox="0 0 15 15"><path d="M3 8l3 3 6-7" fill="none" stroke="#fff" stroke-width="1.300"/></svg></i><svg class="fi"><use href="#calc"/></svg><span>Avg_Performance_Retained</span></div>
        <div class="row fld"><i class="cb"></i><i class="fi"></i><span>Department</span></div>
        <div class="row fld"><i class="cb"></i><i class="fi"></i><span>Education_Level</span></div>
        <div class="row fld"><i class="cb"></i><svg class="fi"><use href="#sigma"/></svg><span>Employee_ID</span></div>
        <div class="row fld"><i class="cb"></i><svg class="fi"><use href="#sigma"/></svg><span>Employee_Satisfaction_Score</span></div>
        <div class="row fld"><i class="cb"></i><i class="fi"></i><span>Gender</span></div>
        <div class="row fld"><svg class="arrow-f" width="9" height="14" viewBox="0 0 9 14"><path d="M1 1l6 6-6 6" fill="none" stroke="#555"/></svg><i class="cb"></i><svg class="fi" viewBox="0 0 16 16"><rect x="1" y="2" width="14" height="13" rx="2" fill="none" stroke="#4d4b49" stroke-width="1.200"/><path d="M1 5.500h14" stroke="#4d4b49"/><path d="M4 8.500h2M7 8.500h2M10 8.500h2M4 11.500h2M7 11.500h2" stroke="#4d4b49"/></svg><span>Hire_Date</span></div>
        <div class="row fld"><i class="cb"></i><i class="fi"></i><span>Job_Title</span></div>
        <div class="row fld"><i class="cb"></i><svg class="fi"><use href="#sigma"/></svg><span>Monthly_Salary</span></div>
        <div class="row fld"><i class="cb"></i><svg class="fi"><use href="#sigma"/></svg><span>Overtime_Hours</span></div>
        <div class="row fld"><i class="cb"></i><svg class="fi"><use href="#sigma"/></svg><span>Performance_Score</span></div>
        <div class="row fld"><i class="cb"></i><svg class="fi"><use href="#sigma"/></svg><span>Projects_Handled</span></div>
        <div class="row fld"><i class="cb"></i><svg class="fi"><use href="#sigma"/></svg><span>Promotions</span></div>
        <div class="row fld"><i class="cb"></i><svg class="fi"><use href="#sigma"/></svg><span>Remote_Work_Frequency</span></div>
        <div class="row fld"><i class="cb"></i><i class="fi"></i><span>Resigned</span></div>
        <div class="row fld"><i class="cb"></i><svg class="fi"><use href="#sigma"/></svg><span>Sick_Days</span></div>
        <div class="row fld"><i class="cb"></i><svg class="fi"><use href="#sigma"/></svg><span>Team_Size</span></div>
        <div class="row fld"><i class="cb"></i><svg class="fi"><use href="#sigma"/></svg><span>Training_Hours</span></div>
        <div class="scroll"></div>
      </div>
    </aside>
  </div>

  <footer class="status">
    <span class="st-page">Page 1 of 1</span>
    <div class="st-zoom">
      <span class="z-pm">-</span>
      <span class="z-track"><i class="z-thumb"></i><i class="z-tick"></i></span>
      <span class="z-pm z-plus">+</span>
      <span class="z-pct">68%</span>
      <svg class="z-fit" width="20" height="18" viewBox="0 0 20 18"><rect x=".5" y=".5" width="19" height="17" fill="#f3f2f1" stroke="#6f8aa8"/><path d="M4 7V4h3M13 4h3v3M16 11v3h-3M7 14H4v-3" fill="none" stroke="#333"/></svg>
    </div>
  </footer>

  <div class="taskbar">
    <div class="tk-news">
      <span class="tk-nic"><svg width="28" height="24" viewBox="0 0 28 24"><rect width="28" height="24" fill="#2f9e1f"/><path d="M14 3a5 5 0 0 1 3 9v3h-6v-3a5 5 0 0 1 3-9z" fill="#e8f5d0"/><path d="M4 19h18" stroke="#d8e83a" stroke-width="2"/></svg><i class="tk-badge">6</i></span>
      <div class="tk-ntx"><b>Watchlist</b><span>Ideas</span></div>
    </div>
    <div class="tk-mid">
      <svg width="31" height="30" viewBox="0 0 31 30"><path d="M0 1l14-1v14H0zM16 0h15v14H16zM0 16h14v14H0zM16 16h15v14H16z" fill="#3cc0f7"/></svg>
      <div class="tk-search"><svg width="20" height="22" viewBox="0 0 20 22"><circle cx="9" cy="9" r="7" fill="none" stroke="#222" stroke-width="1.800"/><path d="M13 14l5 6" stroke="#222" stroke-width="1.800"/></svg><span>Search</span></div>
      <span class="tk-i tk-view"><svg width="32" height="32" viewBox="0 0 32 32"><rect x="1" y="13" width="20" height="18" rx="2" fill="#555"/><rect x="11" y="2" width="20" height="20" rx="2" fill="#eee"/><rect x="11" y="13" width="10" height="9" fill="#aaa"/></svg></span>
      <span class="tk-i tk-dot"><svg width="32" height="32" viewBox="0 0 32 32"><circle cx="16" cy="16" r="15" fill="url(#edge)"/><path d="M6 20c0-7 6-10 12-9 5 1 7 5 5 8-2 2-6 1-7-1-3 6 3 11 9 9-6 5-19 2-19-7z" fill="#39180f" opacity=".45"/></svg></span>
      <span class="tk-i tk-dot"><svg width="32" height="32" viewBox="0 0 32 32"><path d="M1 3h11l3 3h16v24H1z" fill="#d9a21b"/><path d="M1 8h30v22H1z" fill="#fbd94e"/><rect x="10" y="20" width="12" height="6" fill="#1f8fd6"/></svg></span>
      <span class="tk-i"><svg width="32" height="32" viewBox="0 0 40 40"><path d="M15 2h11c3 0 4 3 3 6l-8 23c-2 6-5 7-8 7-7 0-11-6-10-14C4 12 9 2 15 2z" fill="url(#cp1)"/><path d="M27 38H15c5 0 8-3 9-8l7-20c1-3 0-6-3-8 6 1 10 9 10 18 0 9-5 18-11 18z" fill="url(#cp2)"/></svg></span>
      <span class="tk-i"><svg width="32" height="32" viewBox="0 0 32 32"><circle cx="22" cy="6" r="4" fill="#7b83eb"/><circle cx="13" cy="6" r="5" fill="#7b83eb"/><path d="M18 12h12v10c0 3-3 6-6 6s-6-3-6-6z" fill="#5059c9"/><rect x="8" y="11" width="14" height="18" rx="3" fill="#7b83eb"/><rect x="2" y="10" width="15" height="15" rx="2" fill="#4b53bc"/><text x="9.500" y="22" class="tk-T">T</text></svg></span>
      <span class="tk-i"><svg width="32" height="32" viewBox="0 0 32 32"><path d="M9 8V3h14v5" fill="none" stroke="#2aa0e0" stroke-width="2"/><path d="M2 8h28v19c0 2-2 4-4 4H6c-2 0-4-2-4-4z" fill="#f3f3f3"/><rect x="10" y="13" width="5.500" height="5.500" fill="#f25022"/><rect x="16.500" y="13" width="5.500" height="5.500" fill="#7fba00"/><rect x="10" y="19.500" width="5.500" height="5.500" fill="#00a4ef"/><rect x="16.500" y="19.500" width="5.500" height="5.500" fill="#ffb900"/></svg></span>
      <span class="tk-i tk-help"><svg width="36" height="36" viewBox="0 0 36 36"><circle cx="15" cy="21" r="14" fill="#1b8fd8" stroke="#fff" stroke-width="2"/><text x="15" y="28" class="tk-q">?</text><ellipse cx="26" cy="9" rx="9" ry="9" fill="#f7bd0d"/></svg></span>
      <span class="tk-i tk-dot tk-chrome"><svg width="38" height="38" viewBox="0 0 38 38"><circle cx="17" cy="22" r="15" fill="#ea4335"/><path d="M17 22L4 29a15 15 0 0 0 19 7z" fill="#34a853"/><path d="M17 22l6 14a15 15 0 0 0 8-21z" fill="#fbbc05"/><circle cx="17" cy="22" r="7" fill="#4285f4" stroke="#fff" stroke-width="2"/><circle cx="29" cy="11" r="10" fill="#8a8078"/><circle cx="29" cy="8" r="4" fill="#c9a78e"/><path d="M22 19c1-6 13-6 14 0-4 3-10 3-14 0z" fill="#333"/></svg></span>
      <span class="tk-act"><svg width="26" height="32" viewBox="0 0 26 32"><rect x="0" y="16" width="10" height="16" fill="#f5e27a"/><rect x="8" y="9" width="10" height="23" fill="#e6bf2e"/><rect x="16" y="0" width="10" height="32" fill="url(#pb)"/></svg><i class="tk-under"></i></span>
    </div>
    <div class="tk-tray">
      <svg class="tr-caret" width="14" height="9" viewBox="0 0 14 9"><path d="M1 8l6-6 6 6" fill="none" stroke="#fff" stroke-width="1.500"/></svg>
      <svg class="tr-cloud" width="22" height="22" viewBox="0 0 22 22"><ellipse cx="9" cy="9" rx="7" ry="8" fill="#aaa"/><circle cx="15" cy="15" r="6" fill="#3aa0e0"/><path d="M15 12v1M15 14.500v4" stroke="#fff" stroke-width="1.500"/></svg>
      <div class="tr-lang"><span>ENG</span><span>IN</span></div>
      <svg class="tr-s" width="22" height="20" viewBox="0 0 22 20"><path d="M1 7c6-6 14-6 20 0M4 10.500c4-4 10-4 14 0M7 14c2-2 6-2 8 0" fill="none" stroke="#fff" stroke-width="1.300"/><circle cx="11" cy="17" r="1.500" fill="#fff"/></svg>
      <svg class="tr-s" width="22" height="20" viewBox="0 0 22 20"><path d="M2 7h3l5-5v16l-5-5H2z" fill="none" stroke="#fff" stroke-width="1.200"/><path d="M13 6c2 2 2 6 0 8M16 4c3 3 3 9 0 12M19 2c4 4 4 12 0 16" fill="none" stroke="#fff" stroke-width="1.100"/></svg>
      <svg class="tr-s" width="22" height="20" viewBox="0 0 22 20"><rect x="2" y="5" width="16" height="12" rx="2" fill="none" stroke="#fff" stroke-width="1.200"/><path d="M19 9v4" stroke="#fff" stroke-width="2"/><path d="M4 7h11v8H4z" fill="#fff"/><path d="M9 0L5 6h4l-2 5" fill="none" stroke="#fff"/></svg>
      <div class="tr-clock"><span>10:37</span><span>20-09-2025</span></div>
    </div>
  </div>

  <div class="dialog" role="dialog">
    <svg class="dlg-x" width="13" height="13" viewBox="0 0 13 13"><path d="M.5.5l12 12M12.500.5l-12 12" stroke="#8a8886" stroke-width="1.200"/></svg>
    <h2 class="dlg-title">Error fetching data for this visual</h2>
    <p class="dlg-body">MdxScript(Model) (5, 5) Calculation error in measure<br>'Employee_Performance'[Avg_Performance_Retained]: DAX comparison operations do not support<br>comparing values of type True/False with values of type Text. Consider using the VALUE or FORMAT<br>function to convert one of the values.</p>
    <button class="dlg-close">Close</button>
  </div>
</div>
</body>
</html>
```

FILE: styles.css
```css
* { box-sizing: border-box; }
html, body { margin: 0; padding: 0; }
body { font-family: "Open Sans", "Noto Sans", sans-serif; color: #252423; background: #fff; }
.defs { position: absolute; }
i, em { font-style: normal; }
svg { display: block; flex-shrink: 0; }
button { font-family: inherit; border: 0; }

.app { position: relative; width: 1920px; height: 1080px; overflow: hidden; display: flex; flex-direction: column; }

/* title bar */
.titlebar { height: 43px; background: #3b3a39; display: flex; align-items: center; color: #fff; position: relative; flex: none; }
.tb-left { display: flex; align-items: center; width: 746px; padding-left: 21px; }
.tb-ic { width: 20px; height: 20px; margin-right: 17px; }
.tb-dim { margin-right: 11px; }
.tb-title { font-size: 14.300px; }
.tb-search { width: 500px; height: 30px; background: #d2d0cc; border-radius: 3px; display: flex; align-items: center; padding-left: 22px; color: #4f6f66; font-size: 16px; }
.tb-mag { width: 20px; height: 20px; margin-right: 15px; color: #333; }
.tb-right { display: flex; align-items: center; margin-left: auto; padding-right: 20px; }
.tb-sign { font-size: 14px; margin-right: 12px; }
.tb-av { width: 24px; height: 24px; margin-right: 22px; }
.win-b { width: 55px; display: flex; justify-content: center; }
.win-b:last-child { width: 14px; margin-left: 20px; }

/* tabs */
.tabs { height: 45px; background: #fbfbfb; display: flex; align-items: flex-start; padding-left: 29px; gap: 39px; position: relative; flex: none; }
.tab { font-size: 16.500px; line-height: 22px; margin-top: 9px; color: #252423; white-space: nowrap; }
.tab-on { font-weight: 600; position: relative; margin-left: 7px; }
.tab-on::after { content: ""; position: absolute; left: 0; right: 0; top: 26px; height: 3px; background: #117865; }
.tab-view { margin-left: 3px; }
.tab-help { margin-left: 1px; }
.tab-ctx { color: #117865; font-weight: 600; position: relative; z-index: 1; }
.tab-ctx::before { content: ""; position: absolute; z-index: -1; left: -19px; right: -18px; top: -7px; height: 35px; background: #fff; }
.tab-ctx2 { margin-left: 3px; }
.share { position: absolute; left: 1808px; top: 5px; width: 106px; height: 30px; background: #117865; color: #fff; border-radius: 4px; font-size: 14px; display: flex; align-items: center; justify-content: center; gap: 6px; }

/* ribbon */
.ribbon { height: 112px; background: #fbfbfb; display: flex; position: relative; z-index: 3; box-shadow: 0 1px 4px rgba(0,0,0,.22); flex: none; }
.grp { display: flex; flex-direction: column; border-right: 1px solid #d9d8d6; height: 112px; flex: none; }
.g-body { flex: 1; display: grid; justify-items: center; align-items: start; padding-top: 5px; padding-left: 1px; }
.g-label { height: 18px; line-height: 20px; font-size: 12px; color: #444; text-align: center; white-space: nowrap; }
.g-clip { width: 200px; }
.g-data { width: 450px; }
.g-query { width: 144px; }
.g-insert { width: 183px; }
.g-calc { width: 233px; }
.g-sens { width: 92px; }
.g-share { width: 74px; }
.g-copilot { width: 164px; }
.cols-data { grid-template-columns: 72px 48px 92px 24px 78px 42px 94px; }
.cols-query { grid-template-columns: 88px 38px; }
.cols-insert { grid-template-columns: 72px 28px 83px; }
.cols-calc { grid-template-columns: 112px 40px 81px; }
.cols-one { grid-template-columns: 1fr; }
.cols-copilot { grid-template-columns: 110px 36px; }
.rb { display: flex; flex-direction: column; align-items: center; font-size: 14px; line-height: 20px; white-space: nowrap; color: #252423; }
.rb > svg { margin-bottom: 4px; }
.rb > span { height: 20px; display: flex; align-items: center; gap: 3px; }
.cv { width: 8px; height: 6px; margin-top: 2px; }
.rb-off, .paste { color: #c4c2c0; }
.clip-body { display: flex; align-items: flex-start; padding-left: 15px; padding-top: 5px; }
.paste { width: 40px; }
.clip-col { margin-left: 10px; margin-top: -5px; display: flex; flex-direction: column; }
.clip-row { height: 30px; display: flex; align-items: center; font-size: 14px; white-space: nowrap; }
.clip-row svg { width: 20px; margin-right: 5px; }
.collapse { position: absolute; left: 1903px; top: 98px; }
.xl { font: 700 12px "Open Sans", sans-serif; fill: #fff; text-anchor: middle; }
.tbA { font: 400 24px "Open Sans", sans-serif; fill: #1f7fc4; text-anchor: middle; }
.fx { font: italic 400 20px "Liberation Serif", serif; fill: #333; }

/* main */
.main { display: flex; height: 790px; flex: none; position: relative; }
.rail { width: 51px; background: #f3f2f1; border-right: 1px solid #e6e5e3; display: flex; flex-direction: column; align-items: center; padding-top: 14px; gap: 27px; position: relative; flex: none; }
.rail::before { content: ""; position: absolute; left: 0; top: 0; width: 3px; height: 50px; background: #117865; }
.rail svg:nth-child(2) { margin-top: 3px; }
.rail svg:nth-child(3) { margin-top: 1px; }
.rail svg:nth-child(5) { margin-top: -3px; }
.raillab { font: 700 9.500px "Open Sans", sans-serif; fill: #6b6a68; }
.center { width: 1333px; display: flex; flex-direction: column; flex: none; }
.workrow { height: 745px; display: flex; flex: none; }

/* canvas: visuals sit at free positions */
.canvas { position: relative; width: 1081px; background: #fff; flex: none; font-family: Roboto, sans-serif; }
.v-title { position: absolute; font-size: 14px; line-height: 16px; letter-spacing: .08px; color: #333; white-space: nowrap; }
.t-gauge { left: 13px; top: 1px; }
.t-pie { left: 406px; top: 161px; }
.t-bar { left: 698px; top: 159px; }
.t-scat { left: 23px; top: 406px; }
.gauge { position: absolute; left: 46px; top: 40px; width: 124px; height: 62px; }
.g-val { position: absolute; left: 68px; width: 80px; text-align: center; top: 79px; font-size: 19px; font-weight: 300; line-height: 24px; color: #666; }
.g-min, .g-max { position: absolute; top: 89px; font-size: 12.500px; line-height: 16px; color: #777; }
.g-min { left: 17px; }
.g-max { left: 175px; }
.kpi { position: absolute; width: 220px; top: 50px; text-align: center; }
.kpi b { display: block; font-weight: 400; font-size: 45px; line-height: 56px; letter-spacing: -1.800px; color: #252423; }
.kpi span { display: block; font-family: "Open Sans", sans-serif; font-size: 12.700px; line-height: 18px; color: #777; margin-top: -1px; white-space: nowrap; }
.k1 { left: 408px; }
.k2 { left: 630px; top: 53px; }
.k2 span { margin-top: -4px; }
.k3 { left: 833.500px; top: 53px; }
.k3 span { margin-top: -4px; }
.slicer { position: absolute; left: 17px; width: 182px; font-size: 13px; letter-spacing: .1px; }
.s1 { top: 178px; }
.s2 { top: 261px; }
.s3 { top: 335px; }
.sl-h { height: 17px; display: flex; align-items: center; justify-content: space-between; padding: 0 2px 0 3px; color: #444; }
.sl-b { height: 22px; margin-top: 5px; border: 1px solid #ececec; display: flex; align-items: center; justify-content: space-between; padding: 0 5px; color: #9a9a9a; font-size: 11.500px; }
.s2 .sl-b { margin-top: 6px; }
.pie { position: absolute; left: 431.500px; top: 228px; width: 74px; height: 74px; }
.pie-labels { position: absolute; left: 396px; top: 214px; width: 120px; height: 100px; }
.pl text { font: 10.500px "Open Sans", sans-serif; fill: #777; }
.scatter { position: absolute; left: 9px; top: 440px; }
.ax text { font: 10.500px "Open Sans", sans-serif; fill: #777; }
.axt { font: 9.500px "Open Sans", sans-serif; fill: #555; }
.dotline { position: absolute; left: 0; top: 608px; width: 1080px; border-top: 2px dotted #222; }
.errvis { position: absolute; left: 401px; top: 361px; width: 425px; height: 246px; background: #f3f3f3; border: 1px solid #d2d2d2; font-family: "Open Sans", sans-serif; }
.err-ic { position: absolute; left: 198px; top: 95px; }
.err-txt { position: absolute; left: 0; right: 0; top: 124px; text-align: center; font-size: 11.200px; line-height: 18px; color: #252423; white-space: nowrap; }
.err-txt a { color: #117865; text-decoration: underline; }
.h { position: absolute; background: #a8a7a5; }
.h-l { left: -2px; top: 116px; width: 5px; height: 14px; }
.h-r { right: -2px; top: 116px; width: 5px; height: 14px; }
.h-b { left: 205px; bottom: -1px; width: 14px; height: 4px; }
.h-tl, .h-tr, .h-bl, .h-br { width: 10px; height: 10px; background: transparent; border: 0 solid #a8a7a5; }
.h-tl { left: -2px; top: -2px; border-width: 4px 0 0 4px; }
.h-tr { right: -2px; top: -2px; border-width: 4px 4px 0 0; }
.h-bl { left: -2px; bottom: -2px; border-width: 0 0 4px 4px; }
.h-br { right: -2px; bottom: -2px; border-width: 0 4px 4px 0; }

/* pane headers */
.phead { height: 50px; display: flex; align-items: center; justify-content: space-between; padding: 0 10px 2px 9px; flex: none; }
.ptitle { font-size: 18.500px; font-weight: 600; color: #252423; }

/* filters */
.filters { width: 251px; background: #fff; border-left: 1px solid #b3b0ad; flex: none; position: relative; }
.fhead { padding: 0 13px 2px 14px; justify-content: flex-start; }
.fhead .ptitle { margin-left: 10px; }
.fhead .eye { margin-left: auto; margin-right: 22px; }
.f-search { margin: 7px 14px 0 10px; height: 41px; border: 1px solid #a19f9d; border-radius: 2px; display: flex; align-items: center; padding-left: 13px; font-size: 15px; color: #444; }
.f-mag { margin-right: 12px; color: #444; }
.f-sec { margin-top: 6px; border-top: 1px solid #c8c6c4; padding: 20px 9px 0 10px; }
.f-lab { height: 20px; display: flex; justify-content: space-between; align-items: center; font-size: 14px; padding-right: 5px; color: #333; }
.f-lab em { font-weight: 700; letter-spacing: 1px; margin-top: -3px; }
.f-card { margin-top: 13px; height: 60px; border: 1px solid #c8c6c4; border-radius: 2px; padding: 10px 10px; font-size: 14.500px; line-height: 20px; }
.f-lab2 { margin-top: 235px; }
.f-add { margin-top: 12px; height: 57px; border: 1px solid #c8c6c4; border-radius: 2px; display: flex; align-items: center; justify-content: center; font-size: 14.500px; }

/* page bar */
.pagebar { height: 45px; background: #f3f2f1; display: flex; align-items: stretch; flex: none; }
.pb-views { width: 159px; display: flex; position: relative; }
.pb-v { position: absolute; top: 5px; }
.pb-v:nth-child(1) { left: 15px; width: 24px; }
.pb-v:nth-child(2) { left: 74px; }
.pb-von::after { content: ""; position: absolute; left: -1px; top: 31px; width: 30px; height: 3px; background: #117865; }
.pb-arr { position: absolute; left: 117px; top: 17px; display: flex; gap: 21px; }
.pb-tab { width: 94px; background: #fff; border-left: 1px solid #c8c6c4; border-bottom: 5px solid #117865; padding-top: 3px; display: flex; align-items: center; justify-content: center; font-size: 14px; font-weight: 600; }
.pb-add { width: 49px; margin-left: 1px; background: #117865; color: #fff; font-size: 26px; line-height: 40px; font-weight: 700; text-align: center; }

/* visualizations */
.viz { width: 226px; background: #f3f2f1; border-left: 1px solid #e1dfdd; flex: none; }
.v-build { font-size: 13.500px; font-weight: 600; line-height: 16px; height: 16px; padding-left: 10px; color: #333; }
.v-tabs { margin-top: 6px; height: 55px; border-bottom: 1px solid #a8a6a4; padding: 0 0 0 10px; position: relative; display: flex; gap: 42px; }
.v-tabs::after { content: ""; position: absolute; left: 22px; top: 49px; width: 11px; height: 11px; background: #f3f2f1; border: solid #a8a6a4; border-width: 1px 0 0 1px; transform: rotate(45deg); }
.vt { width: 40px; height: 40px; display: flex; align-items: center; justify-content: center; flex: none; }
.vt-on { background: #d2d0ce; border-radius: 2px; }
.v-grid { margin: 8px 0 0 7px; display: grid; grid-template-columns: repeat(6, 35px); grid-auto-rows: 35px; justify-items: center; align-items: center; }
.v-grid svg { width: 24px; height: 24px; }
.k { fill: none; stroke: #444; stroke-width: 1.300; }
.kl { fill: none; stroke: #444; stroke-width: 1.100; }
.klb { fill: none; stroke: #1f7fc4; stroke-width: 1.100; }
.bl { fill: #5aa7e6; stroke: #1f6fb5; stroke-width: 1; }
.ln { fill: #fff; stroke: #555; stroke-width: 1; }
.ln2 { fill: #fff; stroke: #1f6fb5; stroke-width: 1; }
.gy { fill: #c8c6c4; stroke: #777; stroke-width: 1; }
.v123 { font: 11px "Open Sans", sans-serif; fill: #3b8ed0; text-anchor: middle; }
.vR { font: 700 22px "Open Sans", sans-serif; fill: #1f7fc4; text-anchor: middle; }
.vPy { font: 700 20px "Open Sans", sans-serif; fill: #1f7fc4; }
.vA { font: 11px "Open Sans", sans-serif; fill: #1f7fc4; text-anchor: middle; }
.v-sel { width: 30px; height: 30px; border: 1px solid #252423; display: flex; align-items: center; justify-content: center; }
.v-more { font-weight: 700; font-size: 14px; letter-spacing: 1.500px; margin-top: -10px; color: #333; }
.v-div { margin-top: 5px; border-top: 1px solid #e1dfdd; }
.v-lab { height: 20px; line-height: 20px; margin: 12px 0 0 15px; font-size: 14px; color: #444; }
.v-drop { margin: 6px 9px 0 5px; height: 44px; border: 1px dashed #c8c6c4; background: #fff; padding: 5px 3px; }
.chip { height: 27px; background: #edebe9; border: 1px solid #a19f9d; border-radius: 2px; display: flex; align-items: center; padding-left: 5px; font-size: 14px; color: #333; }
.chip span { flex: 1; white-space: nowrap; }
.chip svg:last-child { margin: 0 5px 0 8px; }
.v-bold { margin-top: 14px; font-weight: 600; }
.v-tog { display: flex; justify-content: space-between; align-items: center; height: 20px; margin: 11px 28px 0 15px; font-size: 14px; color: #444; }
.v-tog + .v-tog { margin-top: 13px; }
.tog { width: 40px; height: 20px; border-radius: 10px; display: flex; align-items: center; font-size: 11px; justify-content: center; gap: 2px; }
.tog i { width: 10px; height: 10px; border-radius: 50%; }
.tog-off { border: 1px solid #8a8886; color: #777; background: #fff; }
.tog-off i { background: #605e5c; }
.tog-on { background: #117865; color: #fff; }
.tog-on i { background: #fff; }
.v-add { margin: 13px 9px 0 5px; height: 32px; border: 1px dashed #c8c6c4; background: #fff; display: flex; align-items: center; justify-content: center; font-size: 14px; white-space: nowrap; }

/* data pane */
.data { width: 310px; background: #f3f2f1; border-left: 1px solid #e1dfdd; flex: none; display: flex; flex-direction: column; }
.d-search { margin: 8px 6px 0 5px; height: 30px; background: #fff; border: 1px solid #d8d6d4; border-bottom: 1px solid #605e5c; border-radius: 4px; display: flex; align-items: center; padding-left: 15px; font-size: 16px; color: #777; }
.d-search svg { margin-right: 8px; }
.tree { position: relative; height: 682px; margin-top: 10px; overflow: hidden; }
.row { height: 30px; display: flex; align-items: center; font-size: 14px; white-space: nowrap; color: #333; position: relative; }
.tbl .arrow { margin-left: 19px; }
.tbl .arrow-d { margin-left: 16px; }
.tbl .ticon { margin-left: 8px; margin-right: 6px; }
.tbl .arrow-d + .ticon { margin-left: 7px; margin-right: 5px; }
.okbadge { position: absolute; left: 37px; top: 17px; width: 15px; height: 15px; background: #117865; border-radius: 50%; display: flex; align-items: center; justify-content: center; }
.fld { padding-left: 54px; }
.arrow-f { position: absolute; left: 33px; top: 8px; }
.cb { width: 15px; height: 15px; border: 1px solid #8a8886; border-radius: 2px; background: #f3f2f1; flex: none; }
.cb-on { background: #117865; border-color: #117865; }
.fi { width: 15px; height: 16px; margin: 0 7px 0 11px; flex: none; display: block; }
.scroll { position: absolute; left: 294px; top: 0; width: 10px; height: 620px; background: #8a8886; }

/* status */
.status { height: 30px; background: #f3f2f1; border-top: 2px solid #e1dfdd; border-bottom: 1px solid #111; display: flex; align-items: center; justify-content: space-between; padding: 0 0 0 5px; font-size: 13.500px; color: #444; flex: none; }
.st-zoom { display: flex; align-items: center; }
.z-pm { width: 9px; font-size: 15px; font-weight: 600; line-height: 14px; text-align: center; }
.z-track { width: 126px; height: 1px; background: #555; position: relative; }
.z-thumb { position: absolute; left: 38px; top: -6px; width: 5px; height: 13px; background: #605e5c; }
.z-tick { position: absolute; left: 62px; top: -3px; width: 1px; height: 7px; background: #605e5c; }
.z-plus { margin-left: 6px; font-size: 19px; font-weight: 400; }
.z-pct { margin-left: 17px; font-size: 14px; }
.z-fit { margin: 0 22px 0 26px; }

/* taskbar */
.taskbar { height: 60px; background: #3a1d16; position: relative; display: flex; align-items: center; color: #fff; flex: 1; }
.tk-news { position: absolute; left: 26px; top: 0; display: flex; }
.tk-nic { position: relative; margin-top: 17px; }
.tk-badge { position: absolute; left: 13px; top: -8px; width: 19px; height: 19px; border-radius: 50%; background: #c42b1c; font-size: 12px; text-align: center; line-height: 19px; }
.tk-ntx { margin-left: 10px; margin-top: 8px; display: flex; flex-direction: column; font-size: 14.500px; line-height: 21px; }
.tk-ntx b { font-weight: 400; }
.tk-ntx span { color: #ddd; font-size: 14px; }
.tk-mid { position: absolute; left: 557px; top: 0; height: 60px; display: flex; align-items: center; }
.tk-search { margin-left: 16px; width: 273px; height: 38px; background: #f7f7f7; border-radius: 19px; display: flex; align-items: center; padding-left: 13px; color: #555; font-size: 16px; }
.tk-search svg { margin-right: 12px; }
.tk-i { width: 55px; display: flex; justify-content: center; position: relative; flex: none; }
.tk-view { margin-left: 4px; width: 55.500px; }
.tk-help { padding-left: 4px; }
.tk-chrome { padding-left: 3px; }
.tk-dot::after { content: ""; position: absolute; left: 50%; margin-left: -3px; bottom: -9px; width: 6px; height: 6px; border-radius: 50%; background: #9a9a9a; }
.tk-act { margin-left: 3.500px; width: 48px; height: 50px; background: rgba(255,255,255,.07); border-radius: 5px; display: flex; justify-content: center; padding-top: 8px; position: relative; flex: none; }
.tk-under { position: absolute; left: 15px; bottom: 1px; width: 19px; height: 5px; border-radius: 3px; background: #4fc3f7; }
.tk-T { font: 700 11px "Open Sans", sans-serif; fill: #fff; text-anchor: middle; }
.tk-q { font: 700 20px "Open Sans", sans-serif; fill: #fff; text-anchor: middle; }
.tk-tray { position: absolute; right: 24px; top: 0; height: 60px; display: flex; align-items: center; font-size: 14px; }
.tr-caret { margin-right: 22px; }
.tr-cloud { margin-right: 23px; }
.tr-lang { display: flex; flex-direction: column; align-items: center; line-height: 21px; margin-right: 22px; }
.tr-s { margin-right: 8px; }
.tr-clock { display: flex; flex-direction: column; align-items: flex-end; line-height: 21px; margin-left: 15px; }

/* dialog */
.dialog { position: absolute; left: 558.500px; top: 386px; width: 825.500px; height: 278px; background: #fff; border: 1px solid #d2d0ce; border-radius: 10px; box-shadow: 0 18px 60px rgba(0,0,0,.3); z-index: 5; padding: 27px 33px; }
.dlg-x { position: absolute; right: 13px; top: 9px; }
.dlg-title { margin: 0; font-size: 23.500px; line-height: 28px; font-weight: 600; color: #252423; white-space: nowrap; }
.dlg-body { margin: 26px 0 0; font-size: 15.500px; line-height: 25px; color: #444; white-space: nowrap; }
.dlg-close { position: absolute; left: 703px; top: 213px; width: 83px; height: 32px; background: #117865; color: #fff; font-size: 14.500px; font-weight: 600; border-radius: 3px; }
```
